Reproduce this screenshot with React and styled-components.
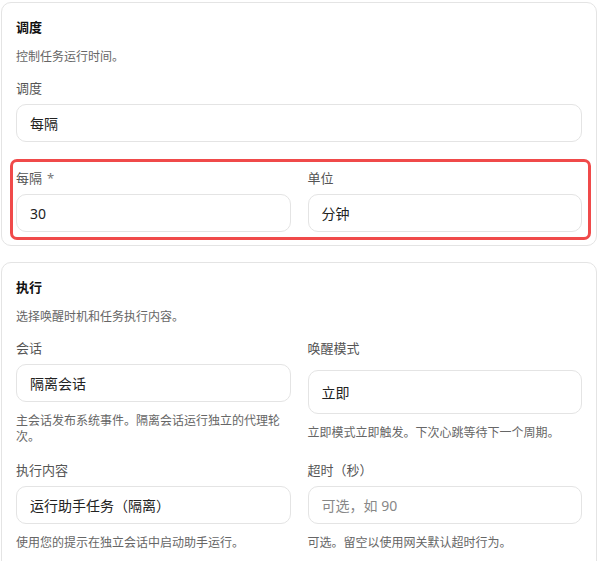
import React from "react";
import styled, { createGlobalStyle } from "styled-components";

const GlobalStyle = createGlobalStyle`
    html, body {
        margin: 0;
        padding: 0;
        background: #ffffff;
    }
    body {
        font-family: "Noto Sans", "Noto Sans CJK SC", sans-serif;
        color: #222;
        overflow: hidden;
    }
`

const Page = styled('div')`
    display: flex;
    flex-direction: column;
    gap: 16px;
    width: 596px;
    padding: 2px 0 0 1px;
`

const Card = styled('section')`
    border: 1px solid #e4e4e4;
    border-radius: 10px;
    padding: 14px 14px ${(p) => p.$bottom || 5}px;
    display: flex;
    flex-direction: column;
`

const Title = styled('h2')`
    margin: 0;
    font-size: 13px;
    line-height: 20px;
    font-weight: 700;
    color: #111;
`

const Desc = styled('p')`
    margin: 11px 0 0;
    font-size: 12px;
    line-height: 18px;
    color: #666;
`

const Field = styled('div')`
    display: flex;
    flex-direction: column;
    margin-top: ${(p) => p.$top || 0}px;
`

const Label = styled('label')`
    font-size: 13px;
    line-height: 20px;
    color: #555;
`

const Star = styled('span')`
    margin-left: 5px;
    color: #777;
`

const Input = styled('div')`
    box-sizing: border-box;
    height: ${(p) => (p.$tall ? 44 : 38)}px;
    margin-top: ${(p) => (p.$tall ? 12 : 6)}px;
    border: 1px solid #e4e4e4;
    border-radius: 10px;
    padding: 0 13px;
    display: flex;
    align-items: center;
    font-size: 14px;
    color: ${(p) => (p.$placeholder ? '#888' : '#222')};
`

const Help = styled('p')`
    margin: 11px 0 0;
    font-size: 12px;
    line-height: 16px;
    color: #666;
`

const Highlight = styled('div')`
    margin: 17px -9px 0 -6px;
    border: 3px solid #f04a4a;
    border-radius: 7px;
    padding: 6px 6px 5px 3px;
`

const Grid = styled('div')`
    display: grid;
    grid-template-columns: 1fr 1fr;
    column-gap: 17px;
    row-gap: 15px;
    margin-top: ${(p) => p.$top || 0}px;
`

const App = () => {
    return (
        <>
            <GlobalStyle />
            <Page>
                <Card>
                    <Title>调度</Title>
                    <Desc>控制任务运行时间。</Desc>
                    <Field $top={12}>
                        <Label>调度</Label>
                        <Input>每隔</Input>
                    </Field>
                    <Highlight>
                        <Grid>
                            <Field>
                                <Label>每隔<Star>*</Star></Label>
                                <Input>30</Input>
                            </Field>
                            <Field>
                                <Label>单位</Label>
                                <Input>分钟</Input>
                            </Field>
                        </Grid>
                    </Highlight>
                </Card>
                <Card $bottom={24}>
                    <Title>执行</Title>
                    <Desc>选择唤醒时机和任务执行内容。</Desc>
                    <Grid $top={12}>
                        <Field>
                            <Label>会话</Label>
                            <Input>隔离会话</Input>
                            <Help>主会话发布系统事件。隔离会话运行独立的代理轮次。</Help>
                        </Field>
                        <Field>
                            <Label>唤醒模式</Label>
                            <Input $tall>立即</Input>
                            <Help>立即模式立即触发。下次心跳等待下一个周期。</Help>
                        </Field>
                        <Field>
                            <Label>执行内容</Label>
                            <Input>运行助手任务（隔离）</Input>
                            <Help>使用您的提示在独立会话中启动助手运行。</Help>
                        </Field>
                        <Field>
                            <Label>超时（秒）</Label>
                            <Input $placeholder>可选，如 90</Input>
                            <Help>可选。留空以使用网关默认超时行为。</Help>
                        </Field>
                    </Grid>
                </Card>
            </Page>
        </>
    )
}

export default App
